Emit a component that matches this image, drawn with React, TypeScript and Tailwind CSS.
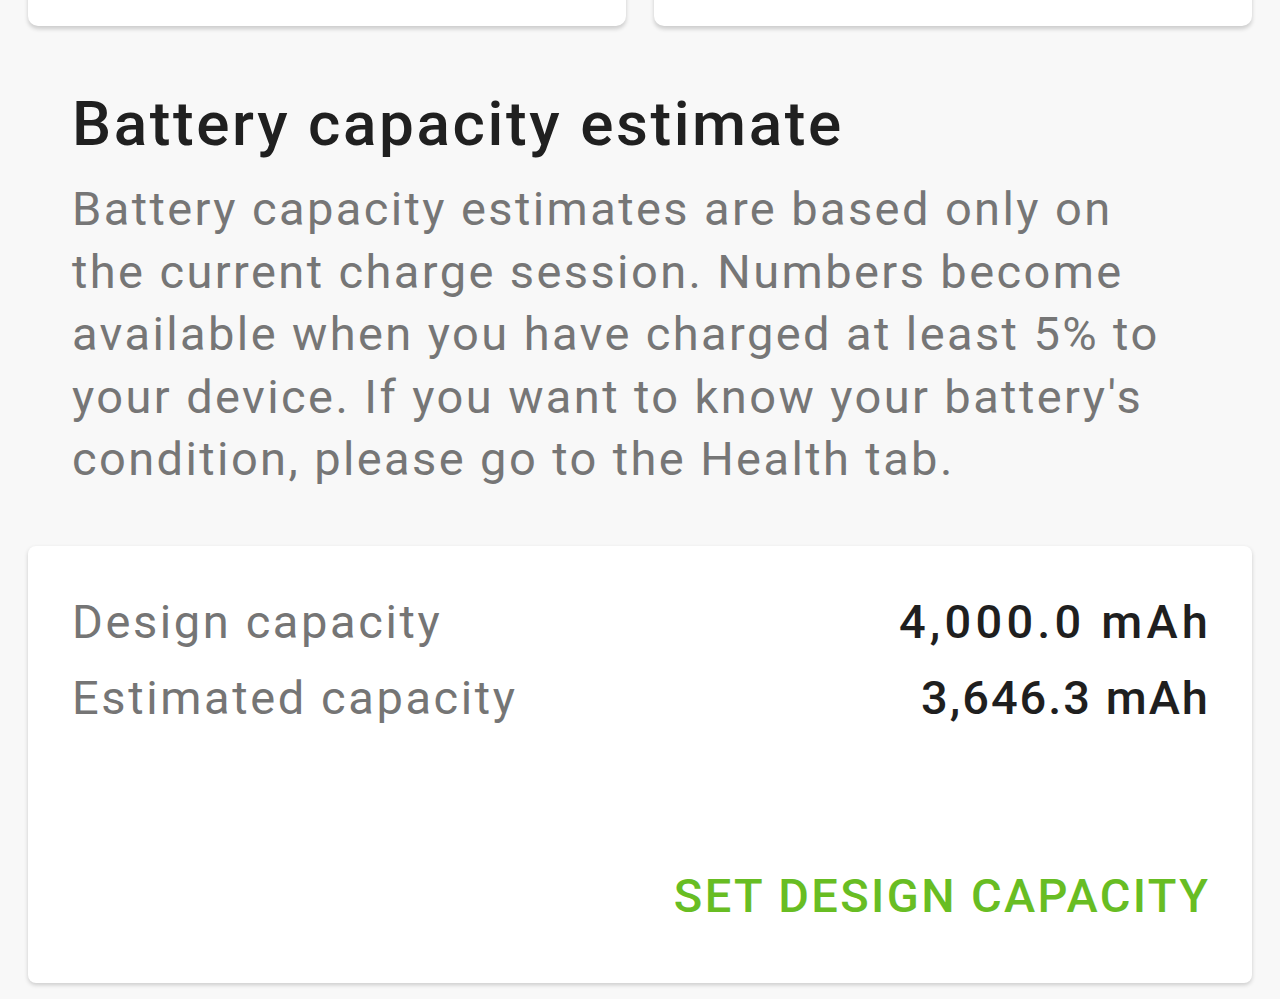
export default function App() {
  return (
    <div className="w-[1280px] h-[999px] overflow-hidden bg-[#f8f8f8]" style={{ fontFamily: "Roboto, 'Open Sans', sans-serif" }}>
      <div className="flex gap-[28px] px-[28px] -mt-[20px]">
        <div className="flex-1 h-[46px] bg-white rounded-b-[10px] shadow-[0_3px_4px_rgba(0,0,0,0.18)]" />
        <div className="flex-1 h-[46px] bg-white rounded-b-[10px] shadow-[0_3px_4px_rgba(0,0,0,0.18)]" />
      </div>
      <div className="pl-[72px] pr-[98px] pt-[62px]">
        <h1 className="text-[62px] leading-[72px] font-medium text-[#202020] tracking-[2.6px] whitespace-nowrap">Battery capacity estimate</h1>
        <p className="mt-[18px] text-[47px] leading-[62.5px] text-[#767676] tracking-[2.4px]">
          Battery capacity estimates are based only on the current charge session. Numbers become available when you have charged at least 5% to your device. If you want to know your battery's condition, please go to the Health tab.
        </p>
      </div>
      <div className="mx-[28px] mt-[55px] h-[437px] bg-white rounded-[8px] shadow-[0_2px_4px_rgba(0,0,0,0.18)] px-[44px] pt-[38px] flex flex-col">
        <div className="flex justify-between text-[47px] leading-[76px]">
          <span className="text-[#757575] tracking-[2.6px]">Design capacity</span>
          <span className="text-[#1f1f1f] font-medium tracking-[4.2px] -mr-[4.2px]">4,000.0 mAh</span>
        </div>
        <div className="flex justify-between text-[47px] leading-[76px]">
          <span className="text-[#757575] tracking-[2.6px]">Estimated capacity</span>
          <span className="text-[#1f1f1f] font-medium tracking-[2px] -mr-[2px]">3,646.3 mAh</span>
        </div>
        <div className="mt-auto mb-[57px] flex justify-end">
          <span className="text-[47px] font-medium text-[#68bd23] leading-[60px] tracking-[2.4px] -mr-[2.4px]">SET DESIGN CAPACITY</span>
        </div>
      </div>
    </div>
  );
}
